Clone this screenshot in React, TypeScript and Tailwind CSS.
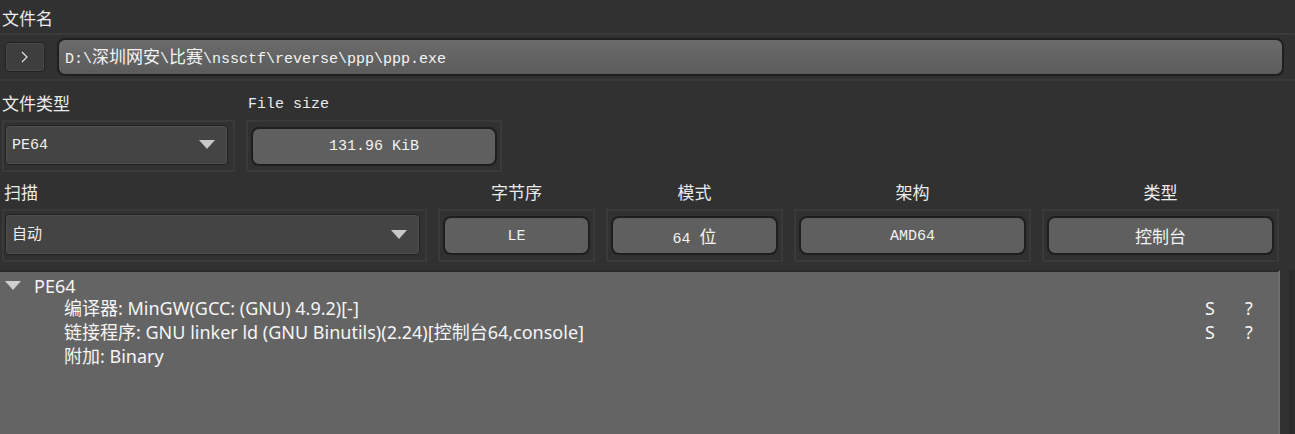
import React from "react";

const mono = "font-['Liberation_Mono','Noto_Sans_CJK_SC',monospace]";
const cjk = "font-['Noto_Sans_CJK_SC','Noto_Sans',sans-serif]";
const ui = "font-['Noto_Sans','Noto_Sans_CJK_SC',sans-serif]";

const Frame = ({ w, h, children }: { w: number; h: number; children: React.ReactNode }) => (
  <div
    className="flex items-center justify-center border-2 border-[#3a3a3a] bg-[#313131]"
    style={{ width: w, height: h }}
  >
    {children}
  </div>
);

const Field = ({ w, children }: { w: number; children: React.ReactNode }) => (
  <div
    className={`flex h-[39px] items-center justify-center rounded-[8px] border-2 border-[#1e1e1e] bg-[#5f5f5f] pt-[3px] text-[15px] text-[#f2f2f2] ${mono}`}
    style={{ width: w }}
  >
    <span>{children}</span>
  </div>
);

const Combo = ({ w, h, text }: { w: number; h: number; text: string }) => (
  <div
    className="flex items-center justify-between rounded-[4px] border border-[#222] bg-[#444] pl-[6px] pr-[12px] shadow-[inset_0_0_0_1px_#4e4e4e]"
    style={{ width: w, height: h }}
  >
    <span className={`pt-[3px] text-[15px] text-[#f0f0f0] ${mono}`}>{text}</span>
    <svg width="16" height="10" viewBox="0 0 16 10">
      <polygon points="0,0 16,0 8,9" fill="#c8c8c8" />
    </svg>
  </div>
);

const Label = ({ children, center }: { children: React.ReactNode; center?: boolean }) => (
  <div className={`flex flex-1 items-center pt-[3px] text-[17px] text-[#ececec] ${cjk} ${center ? "justify-center" : "pl-[2px]"}`}>
    {children}
  </div>
);

const big = "text-[17px]";

export default function App() {
  return (
    <div className="relative flex h-[434px] w-[1295px] flex-col overflow-hidden bg-[#313131]">
      {/* 文件名 */}
      <div className="flex h-[33px] items-center pl-[2px] pt-[2px]">
        <span className={`text-[17px] text-[#ececec] ${cjk}`}>文件名</span>
      </div>
      <div className="flex h-[48px] items-center border-y-2 border-[#3a3a3a] pl-[5px]">
        <div className="flex h-[30px] w-[40px] items-center justify-center rounded-[4px] border border-[#222] bg-[#3e3e3e] shadow-[inset_0_0_0_1px_#4a4a4a]">
          <svg width="8" height="12" viewBox="0 0 8 12">
            <polyline points="1,1 6,6 1,11" fill="none" stroke="#e6e6e6" strokeWidth="1.2" />
          </svg>
        </div>
        <div
          className={`ml-[12px] flex h-[38px] w-[1227px] items-center rounded-[8px] border-2 border-[#1f1f1f] bg-gradient-to-b from-[#6b6b6b] to-[#5c5c5c] pl-[6px] pt-[3px] text-[15px] text-[#f4f4f4] ${mono}`}
        >
          <span>
            D:\<span className={big}>深圳网安</span>\<span className={big}>比赛</span>\nssctf\reverse\ppp\ppp.exe
          </span>
        </div>
      </div>

      {/* 文件类型 / File size */}
      <div className="flex gap-[11px] pl-[2px]">
        <div className="flex w-[233px] flex-col">
          <div className="flex h-[39px] items-center pt-[4px]">
            <span className={`text-[17px] text-[#ececec] ${cjk}`}>文件类型</span>
          </div>
          <Frame w={233} h={52}>
            <div className="pb-[2px] pr-[4px]">
              <Combo w={223} h={40} text="PE64" />
            </div>
          </Frame>
        </div>
        <div className="flex w-[256px] flex-col">
          <div className={`flex h-[39px] items-center pl-[2px] pt-[9px] text-[15px] text-[#ececec] ${mono}`}>File size</div>
          <Frame w={256} h={52}>
            <Field w={246}>131.96 KiB</Field>
          </Frame>
        </div>
      </div>

      {/* 扫描 row */}
      <div className="flex gap-[11px] pl-[2px]">
        {[
          { w: 425, label: "扫描", center: false },
          { w: 157, label: "字节序", center: true, val: "LE" },
          { w: 177, label: "模式", center: true, val: "64 位" },
          { w: 237, label: "架构", center: true, val: "AMD64" },
          { w: 237, label: "类型", center: true, val: "控制台" },
        ].map((c) => (
          <div key={c.label} className="flex flex-col" style={{ width: c.w }}>
            <div className="flex h-[37px]">
              <Label center={c.center}>{c.label}</Label>
            </div>
            <Frame w={c.w} h={53}>
              {c.val ? (
                <Field w={c.w - 10}>
                  {c.val === "控制台" ? (
                    <span className={`text-[17px] ${cjk}`}>控制台</span>
                  ) : c.val === "64 位" ? (
                    <>
                      64&nbsp;<span className={`text-[17px] ${cjk}`}>位</span>
                    </>
                  ) : (
                    c.val
                  )}
                </Field>
              ) : (
                <div className="pb-[2px] pr-[4px]">
                  <Combo w={415} h={41} text="自动" />
                </div>
              )}
            </Frame>
          </div>
        ))}
      </div>

      {/* tree */}
      <div className="mt-[8px] flex flex-1">
        <div className={`w-[1280px] border-t-2 border-r-2 border-t-[#2a2a2a] border-r-[#6e6e6e] bg-[#646464] text-[18px] leading-[24px] text-[#f5f5f5] ${ui}`}>
          <div className="flex h-[24px] items-center pl-[5px] pt-[4px]">
            <svg width="16" height="10" viewBox="0 0 16 10">
              <polygon points="0,0 16,0 8,9" fill="#cfcfcf" />
            </svg>
            <span className="ml-[13px]">PE64</span>
          </div>
          {[
            { t: "编译器: MinGW(GCC: (GNU) 4.9.2)[-]", s: true },
            { t: "链接程序: GNU linker ld (GNU Binutils)(2.24)[控制台64,console]", s: true },
            { t: "附加: Binary", s: false },
          ].map((r) => (
            <div key={r.t} className="flex h-[24px] items-center pl-[64px]">
              <span className="flex-1">{r.t}</span>
              {r.s && (
                <>
                  <span className="w-[40px]">S</span>
                  <span className="w-[33px]">?</span>
                </>
              )}
            </div>
          ))}
        </div>
        <div className="w-[9px] bg-[#313131]" />
        <div className="flex-1 bg-[#2b2b2b]" />
      </div>
    </div>
  );
}
